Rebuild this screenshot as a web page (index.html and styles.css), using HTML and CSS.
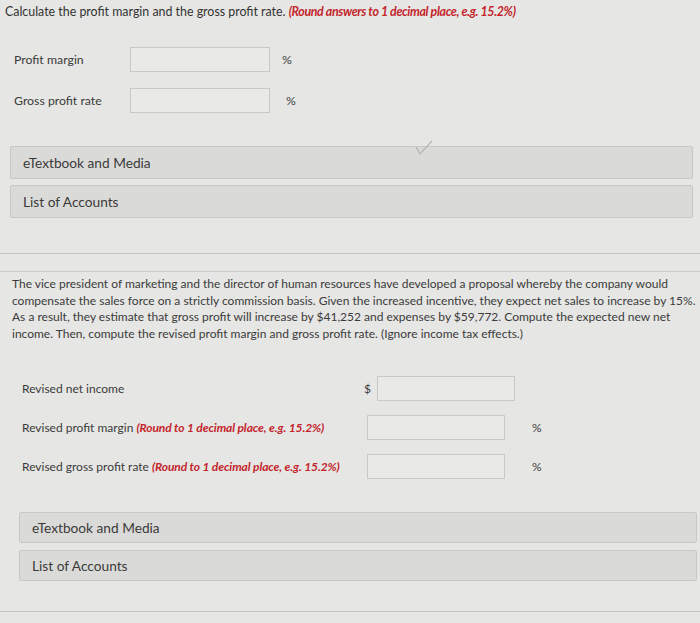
FILE: index.html
```html
<!DOCTYPE html>
<html>
<head>
<meta charset="utf-8">
<link rel="stylesheet" href="styles.css">
</head>
<body>
<div class="page">
  <section class="part part-a">
    <p class="title">Calculate the profit margin and the gross profit rate. <span class="hint">(Round answers to 1 decimal place, e.g. 15.2%)</span></p>
    <div class="rows-a">
      <div class="row-a">
        <span class="label">Profit margin</span>
        <span class="input"></span>
        <span class="unit">%</span>
      </div>
      <div class="row-a">
        <span class="label">Gross profit rate</span>
        <span class="input"></span>
        <span class="unit unit-b">%</span>
      </div>
    </div>
    <div class="bars bars-a">
      <div class="bar">eTextbook and Media
        <svg class="check" width="18" height="15" viewBox="0 0 18 15"><path d="M1 7 L5 14 L17 1" fill="none" stroke="#b5b5b3" stroke-width="1.2"/></svg>
      </div>
      <div class="bar">List of Accounts</div>
    </div>
  </section>

  <div class="divider"></div>

  <section class="part part-b">
    <p class="para">The vice president of marketing and the director of human resources have developed a proposal whereby the company would compensate the sales force on a strictly commission basis. Given the increased incentive, they expect net sales to increase by 15%. As a result, they estimate that gross profit will increase by $41,252 and expenses by $59,772. Compute the expected new net income. Then, compute the revised profit margin and gross profit rate. (Ignore income tax effects.)</p>
    <div class="rows-b">
      <div class="row-b row-net">
        <span class="label">Revised net income</span>
        <span class="cur">$</span>
        <span class="input input-b"></span>
        <span class="unit"></span>
      </div>
      <div class="row-b">
        <span class="label">Revised profit margin <span class="hint hint-b">(Round to 1 decimal place, e.g. 15.2%)</span></span>
        <span class="cur"></span>
        <span class="input input-b shift"></span>
        <span class="unit">%</span>
      </div>
      <div class="row-b">
        <span class="label">Revised gross profit rate <span class="hint hint-b">(Round to 1 decimal place, e.g. 15.2%)</span></span>
        <span class="cur"></span>
        <span class="input input-b shift"></span>
        <span class="unit">%</span>
      </div>
    </div>
    <div class="bars bars-b">
      <div class="bar">eTextbook and Media</div>
      <div class="bar">List of Accounts</div>
    </div>
  </section>
  <div class="bottom-line"></div>
</div>
</body>
</html>
```

FILE: styles.css
```css
html, body {
  margin: 0;
  padding: 0;
}
body {
  background: #e6e6e4;
  font-family: Lato, "Open Sans", sans-serif;
  font-size: 12px;
  color: #3b3b3b;
  width: 700px;
  height: 623px;
  overflow: hidden;
}
.page {
  display: flex;
  flex-direction: column;
}
.title {
  margin: 4px 0 0 5px;
  line-height: 16px;
  font-size: 12.4px;
  color: #333333;
}
.hint {
  color: #c4242b;
  font-weight: bold;
  font-style: italic;
  letter-spacing: -0.35px;
}
.hint-b {
  letter-spacing: -0.1px;
}
.rows-a {
  display: flex;
  flex-direction: column;
  gap: 16px;
  margin-top: 27px;
  padding-left: 14px;
  font-size: 12.3px;
}
.row-a {
  display: grid;
  grid-template-columns: 116px 140px auto;
  align-items: center;
}
.input {
  height: 23px;
  border: 1px solid #c9c9c7;
  background: #e9e9e7;
}
.unit {
  padding-left: 12px;
}
.unit-b {
  padding-left: 16px;
}
.bars {
  display: flex;
  flex-direction: column;
}
.bars-a {
  gap: 6px;
  margin: 33px 7px 0 10px;
}
.bar {
  position: relative;
  height: 31px;
  line-height: 31px;
  padding-left: 12px;
  background: #dadad8;
  border: 1px solid #c8c8c6;
  border-radius: 2px;
  font-size: 13.7px;
  color: #3a3a3a;
}
.check {
  position: absolute;
  left: 404px;
  top: -7px;
}
.divider {
  margin-top: 35px;
  height: 17px;
  border-top: 1px solid #c4c4c2;
  border-bottom: 1px solid #cbcbc9;
}
.para {
  margin: 4px 4px 0 12px;
  line-height: 16.5px;
}
.rows-b {
  display: flex;
  flex-direction: column;
  gap: 14px;
  margin-top: 34px;
  padding-left: 22px;
}
.row-b {
  display: grid;
  grid-template-columns: 338px 17px 138px auto;
  align-items: center;
}
.cur {
  padding-left: 4px;
}
.input-b {
  height: 23px;
}
.shift {
  margin-left: -10px;
  margin-right: 10px;
}
.row-b .unit {
  padding-left: 17px;
}
.bars-b {
  gap: 7px;
  margin: 33px 3px 0 19px;
}
.bars-b .bar {
  height: 29px;
  line-height: 29px;
}
.bottom-line {
  margin-top: 30px;
  border-top: 1px solid #c4c4c2;
}
```
